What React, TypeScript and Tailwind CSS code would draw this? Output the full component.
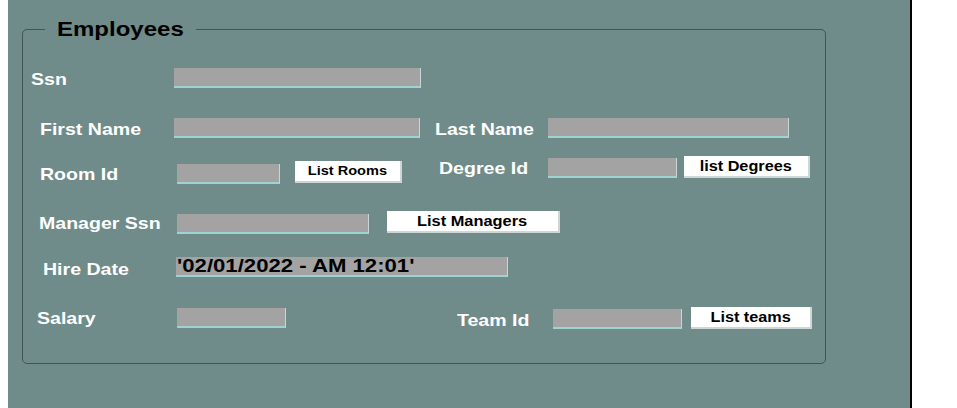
import React from 'react';

const font = { fontFamily: '"Liberation Sans", Arial, sans-serif' };

const Label = ({ text, className }: { text: string; className: string }) => (
  <span className={`block h-[20px] shrink-0 text-[17px] font-bold leading-[20px] whitespace-nowrap text-white ${className}`}>
    <span className="inline-block origin-left scale-x-[1.15]">{text}</span>
  </span>
);

const Field = ({ className, value }: { className: string; value?: string }) => (
  <div
    className={`h-[20px] shrink-0 border-r border-b-2 border-r-[#c9d6d6] border-b-[#9ed3d2] bg-[#a3a3a3] pl-[1px] text-[18px] font-bold leading-[18px] whitespace-nowrap text-black ${className}`}
  >
    {value && <span className="inline-block origin-left scale-x-[1.23]">{value}</span>}
  </div>
);

const ListButton = ({ text, className, scale }: { text: string; className: string; scale: string }) => (
  <button
    type="button"
    className={`flex h-[22px] shrink-0 items-center justify-center border-r-2 border-b-2 border-[#cfd6d6] bg-white font-bold whitespace-nowrap text-black ${className}`}
  >
    <span className={`inline-block ${scale}`}>{text}</span>
  </button>
);

export default function App() {
  return (
    <div className="flex h-[408px] w-[957px] bg-white" style={font}>
      <div className="ml-[8px] h-full w-[904px] border-r-2 border-black bg-[#6f8c8a]">
        <fieldset className="mt-[19px] ml-[14px] w-[804px] rounded-[5px] border border-[#3e5654] pb-[34px]">
          <legend className="ml-[22px] px-[12px] text-[20px] font-bold leading-[21px] text-black">
            <span className="inline-block origin-left scale-x-[1.2] pr-[21px]">Employees</span>
          </legend>

          <div className="flex flex-col">
            <div className="mt-[28px] flex h-[20px] items-start">
              <Label text="Ssn" className="mt-[2px] ml-[8px] w-[143px]" />
              <Field className="w-[247px]" />
            </div>

            <div className="mt-[30px] flex h-[20px] items-start">
              <Label text="First Name" className="mt-[2px] ml-[17px] w-[134px]" />
              <Field className="w-[246px]" />
              <Label text="Last Name" className="mt-[2px] ml-[15px] w-[113px]" />
              <Field className="w-[241px]" />
            </div>

            <div className="mt-[18px] flex h-[28px] items-start">
              <Label text="Room Id" className="mt-[9px] ml-[17px] w-[137px]" />
              <Field className="mt-[8px] w-[103px]" />
              <ListButton
                text="List Rooms"
                className="mt-[5px] ml-[15px] w-[107px] text-[13px]"
                scale="scale-x-[1.12]"
              />
              <Label text="Degree Id" className="mt-[3px] ml-[37px] w-[109px]" />
              <Field className="mt-[2px] w-[129px]" />
              <ListButton text="list Degrees" className="ml-[7px] w-[126px] text-[14px]" scale="scale-x-[1.16]" />
            </div>

            <div className="mt-[27px] flex h-[23px] items-start">
              <Label text="Manager Ssn" className="mt-[3px] ml-[16px] w-[138px]" />
              <Field className="mt-[3px] w-[192px]" />
              <ListButton text="List Managers" className="ml-[18px] w-[173px] text-[14px]" scale="scale-x-[1.17]" />
            </div>

            <div className="mt-[23px] flex h-[20px] items-start">
              <Label text="Hire Date" className="mt-[3px] ml-[20px] w-[133px]" />
              <Field className="w-[332px]" value="'02/01/2022 - AM 12:01'" />
            </div>

            <div className="mt-[30px] flex h-[22px] items-start">
              <Label text="Salary" className="mt-[2px] ml-[14px] w-[140px]" />
              <Field className="mt-[1px] w-[109px]" />
              <Label text="Team Id" className="mt-[4px] ml-[171px] w-[96px]" />
              <Field className="mt-[2px] w-[129px]" />
              <ListButton
                text="List teams"
                className="ml-[9px] h-[21px] w-[121px] text-[14px]"
                scale="scale-x-[1.16]"
              />
            </div>
          </div>
        </fieldset>
      </div>
    </div>
  );
}
